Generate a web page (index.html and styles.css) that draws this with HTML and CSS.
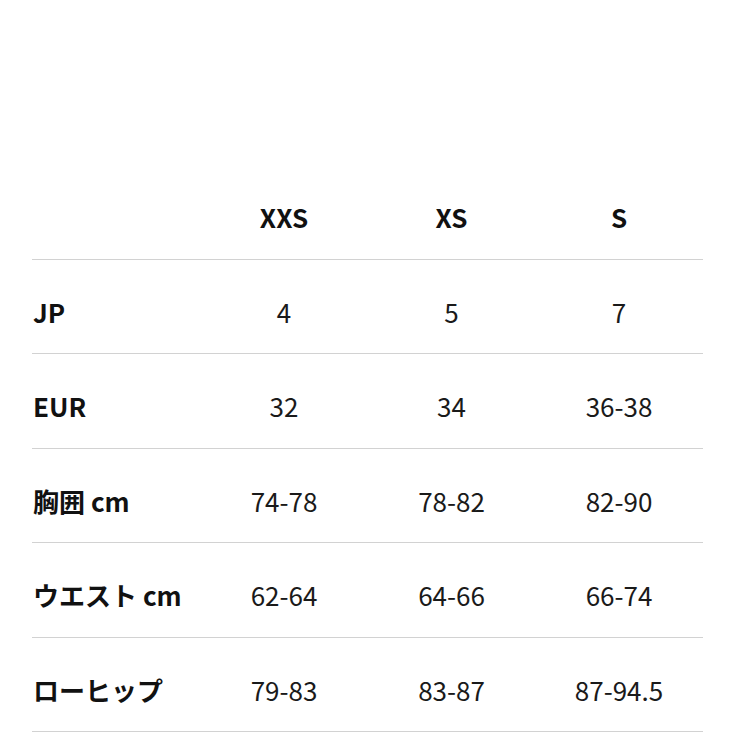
FILE: index.html
```html
<!DOCTYPE html>
<html lang="ja">
<head>
<meta charset="utf-8">
<link rel="stylesheet" href="styles.css">
</head>
<body>
<div class="sheet">
  <div class="row head">
    <div class="cell label"></div>
    <div class="cell">XXS</div>
    <div class="cell">XS</div>
    <div class="cell">S</div>
  </div>
  <div class="row">
    <div class="cell label">JP</div>
    <div class="cell">4</div>
    <div class="cell">5</div>
    <div class="cell">7</div>
  </div>
  <div class="row">
    <div class="cell label">EUR</div>
    <div class="cell">32</div>
    <div class="cell">34</div>
    <div class="cell">36-38</div>
  </div>
  <div class="row">
    <div class="cell label">胸囲 cm</div>
    <div class="cell">74-78</div>
    <div class="cell">78-82</div>
    <div class="cell">82-90</div>
  </div>
  <div class="row">
    <div class="cell label">ウエスト cm</div>
    <div class="cell">62-64</div>
    <div class="cell">64-66</div>
    <div class="cell">66-74</div>
  </div>
  <div class="row">
    <div class="cell label">ローヒップ</div>
    <div class="cell">79-83</div>
    <div class="cell">83-87</div>
    <div class="cell">87-94.5</div>
  </div>
</div>
</body>
</html>
```
FILE: styles.css
```css
html, body {
  margin: 0;
  padding: 0;
  background: #ffffff;
}
body {
  font-family: "Noto Sans CJK JP", "Noto Sans", sans-serif;
  color: #1a1a1a;
}
.sheet {
  width: 671px;
  margin: 0 0 0 32px;
  padding-top: 204px;
}
.row {
  display: grid;
  grid-template-columns: 168px 168px 167px 168px;
  box-sizing: border-box;
  height: 94.4px;
  padding-top: 39px;
  border-bottom: 1.5px solid #d2d2d2;
}
.row.head {
  height: 56px;
  padding-top: 0;
}
.cell {
  font-size: 26px;
  line-height: 26px;
  text-align: center;
  white-space: nowrap;
}
.head .cell {
  font-weight: 700;
  color: #111111;
}
.cell.label {
  text-align: left;
  font-weight: 700;
  color: #111111;
  padding-left: 1px;
}
```
